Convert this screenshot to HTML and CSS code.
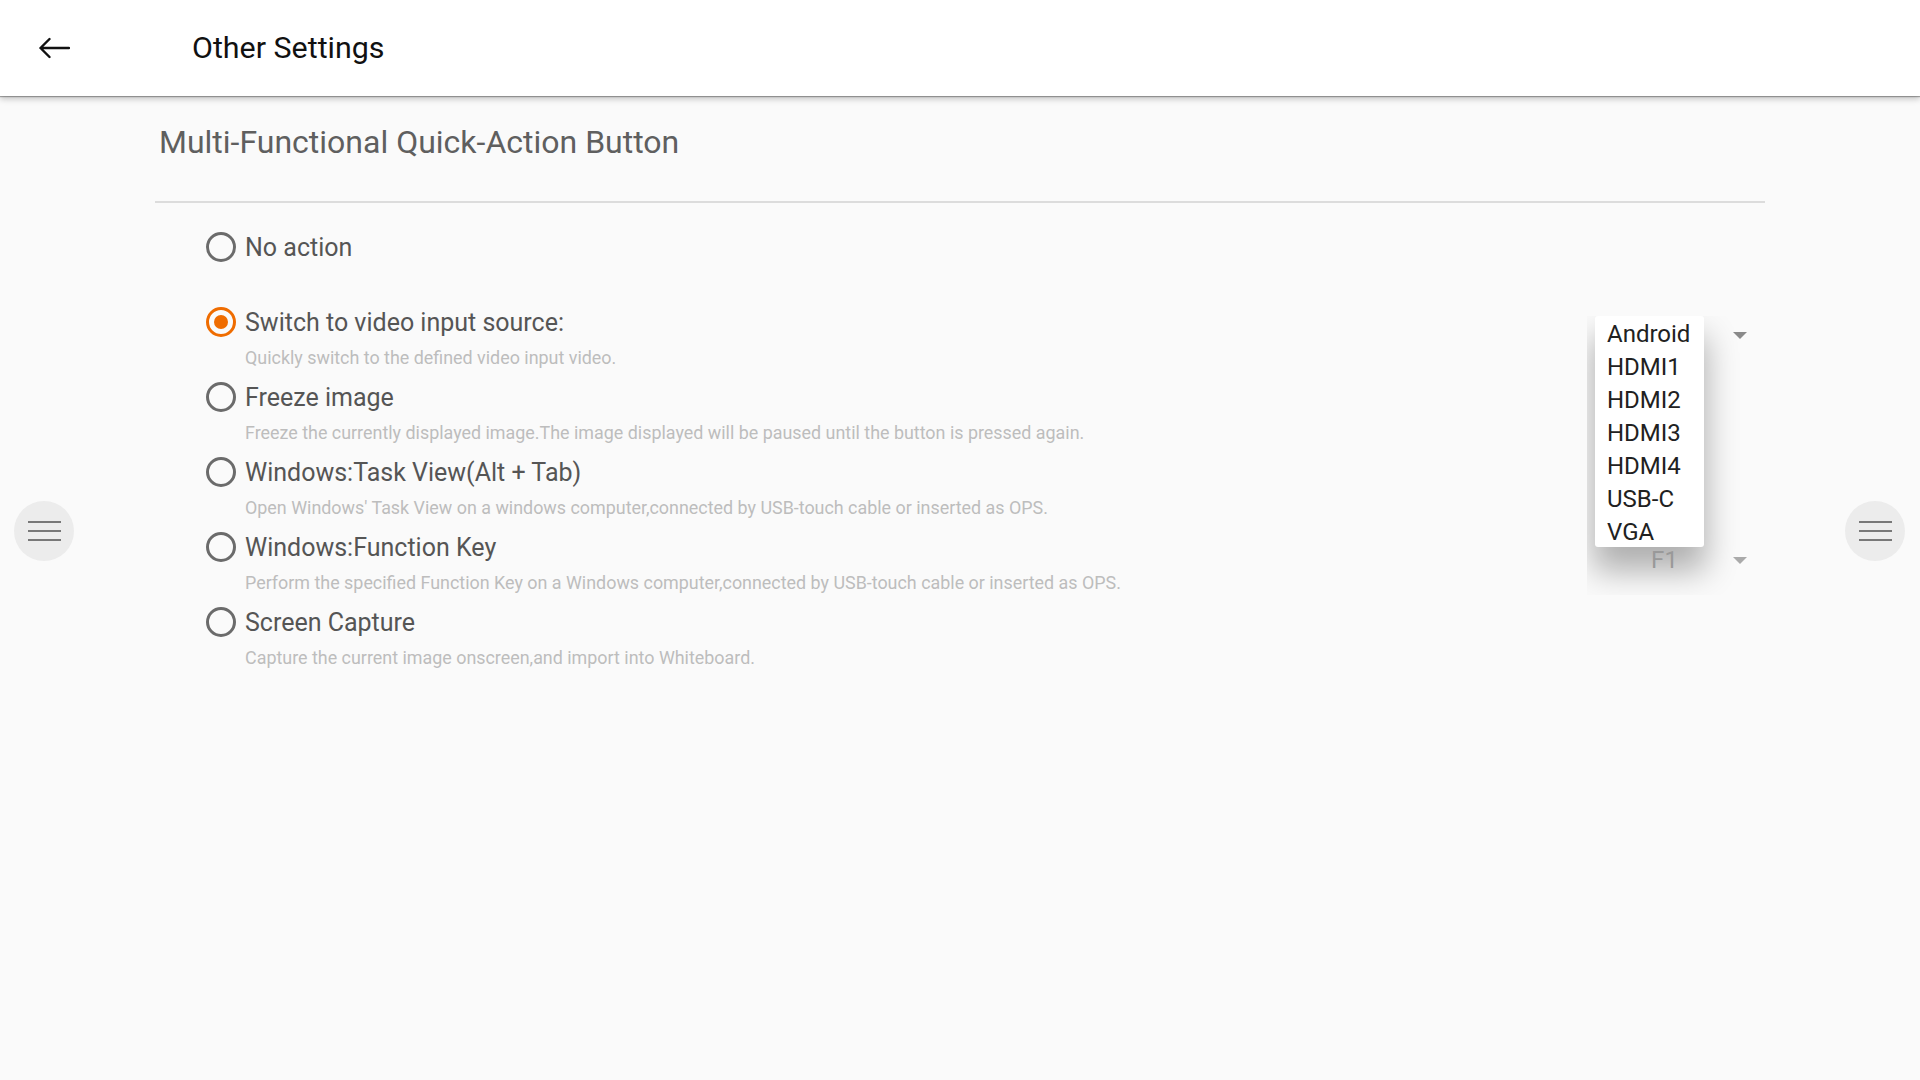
FILE: index.html
```html
<!DOCTYPE html>
<html lang="en">

<head>
    <meta charset="UTF-8">
    <meta name="viewport" content="width=device-width, initial-scale=1.0">
    <title>Other Settings</title>
    <link rel="stylesheet" href="styles.css">
</head>

<body>

    <header class="topbar">
        <svg class="back" width="32" height="22" viewBox="0 0 32 22">
            <path d="M31 11 H2.5 M11.5 2 L2.5 11 L11.5 20" fill="none" stroke="#111" stroke-width="2.4" stroke-linecap="round" stroke-linejoin="round" />
        </svg>
        <h1>Other Settings</h1>
    </header>

    <main class="page">
        <button class="side side-left"><span></span><span></span><span></span></button>
        <button class="side side-right"><span></span><span></span><span></span></button>

        <section class="content">
            <h2>Multi-Functional Quick-Action Button</h2>
            <div class="divider"></div>

            <ul class="options">
                <li class="option">
                    <div class="option-main">
                        <div class="label"><i class="radio"></i>No action</div>
                        <p class="desc"></p>
                    </div>
                </li>
                <li class="option">
                    <div class="option-main">
                        <div class="label"><i class="radio checked"></i>Switch to video input source:</div>
                        <p class="desc">Quickly switch to the defined video input video.</p>
                    </div>
                    <div class="spinner">
                        <span class="value"></span>
                        <i class="caret"></i>
                        <!-- open dropdown, its shadow is clipped by the spinner column -->
                        <div class="dropdown-clip">
                            <ul class="dropdown">
                                <li>Android</li>
                                <li>HDMI1</li>
                                <li>HDMI2</li>
                                <li>HDMI3</li>
                                <li>HDMI4</li>
                                <li>USB-C</li>
                                <li>VGA</li>
                            </ul>
                        </div>
                    </div>
                </li>
                <li class="option">
                    <div class="option-main">
                        <div class="label"><i class="radio"></i>Freeze image</div>
                        <p class="desc">Freeze the currently displayed image.The image displayed will be paused until the button is pressed again.</p>
                    </div>
                </li>
                <li class="option">
                    <div class="option-main">
                        <div class="label"><i class="radio"></i>Windows:Task View(Alt + Tab)</div>
                        <p class="desc">Open Windows' Task View on a windows computer,connected by USB-touch cable or inserted as OPS.</p>
                    </div>
                </li>
                <li class="option">
                    <div class="option-main">
                        <div class="label"><i class="radio"></i>Windows:Function Key</div>
                        <p class="desc">Perform the specified Function Key on a Windows computer,connected by USB-touch cable or inserted as OPS.</p>
                    </div>
                    <div class="spinner disabled">
                        <span class="value">F1</span>
                        <i class="caret"></i>
                    </div>
                </li>
                <li class="option">
                    <div class="option-main">
                        <div class="label"><i class="radio"></i>Screen Capture</div>
                        <p class="desc">Capture the current image onscreen,and import into Whiteboard.</p>
                    </div>
                </li>
            </ul>
        </section>
    </main>

</body>

</html>
```

FILE: styles.css
```css
* {
    margin: 0;
    padding: 0;
    box-sizing: border-box;
    font-family: Roboto, 'Noto Sans', sans-serif;
}

body {
    background-color: #fafafa;
    width: 1920px;
    height: 1080px;
    overflow: hidden;
}

.topbar {
    height: 96px;
    background: #fff;
    display: flex;
    align-items: center;
    padding-left: 38px;
    box-shadow: 0 1px 1px rgba(0, 0, 0, 0.3), 0 3px 6px rgba(0, 0, 0, 0.22);
    position: relative;
    z-index: 2;
}

.topbar .back {
    display: block;
}

.topbar h1 {
    margin-left: 122px;
    font-size: 30.4px;
    font-weight: 400;
    color: #111;
    line-height: 40px;
}

.page {
    position: relative;
    height: 984px;
}

.side {
    position: absolute;
    top: 405px;
    width: 60px;
    height: 60px;
    border: none;
    border-radius: 50%;
    background: #ececec;
    display: flex;
    flex-direction: column;
    align-items: center;
    justify-content: center;
    gap: 7px;
}

.side span {
    display: block;
    width: 33px;
    height: 2px;
    background: #787878;
}

.side-left {
    left: 14px;
}

.side-right {
    right: 15px;
}

.content {
    width: 1765px;
    padding: 26px 0 0 155px;
}

.content h2 {
    font-size: 32px;
    font-weight: 400;
    color: #5f5f5f;
    line-height: 40px;
    padding-left: 4px;
}

.divider {
    margin-top: 39px;
    height: 2px;
    background: #dcdcdc;
}

.options {
    list-style: none;
    margin-top: 25px;
}

.option {
    display: flex;
    height: 75px;
    padding-left: 51px;
}

.option-main {
    flex: 1;
}

.label {
    display: flex;
    align-items: center;
    height: 36px;
    padding-top: 2px;
    font-size: 25px;
    color: #555;
}

.radio {
    width: 30px;
    height: 30px;
    border: 3px solid #6b6b6b;
    border-radius: 50%;
    margin-right: 9px;
    display: flex;
    align-items: center;
    justify-content: center;
}

.radio.checked {
    border-color: #ef6c00;
}

.radio.checked::after {
    content: "";
    width: 14px;
    height: 14px;
    border-radius: 50%;
    background: #ef6c00;
}

.desc {
    margin-top: 9px;
    margin-left: 39px;
    height: 20px;
    line-height: 20px;
    font-size: 17.9px;
    color: #bdbdbd;
}

.spinner {
    position: relative;
    width: 162px;
    height: 64px;
    margin-right: 13px;
    display: flex;
    align-items: center;
}

.spinner .value {
    flex: 1;
    text-align: center;
    font-size: 24px;
    color: #212121;
    padding-left: 6px;
}

.spinner.disabled .value {
    color: #999;
    position: relative;
    z-index: 1;
}

.caret {
    width: 0;
    height: 0;
    border-left: 7px solid transparent;
    border-right: 7px solid transparent;
    border-top: 7px solid #8a8a8a;
    margin-right: 5px;
}

.spinner.disabled .caret {
    border-top-color: #aaa;
    position: relative;
    z-index: 1;
}

.dropdown-clip {
    position: absolute;
    left: -3px;
    top: 13px;
    width: 165px;
    height: 279px;
    overflow: hidden;
}

.dropdown {
    position: absolute;
    left: 8px;
    top: 0;
    width: 109px;
    list-style: none;
    background: #fff;
    border-radius: 3px;
    box-shadow: 0 22px 32px 2px rgba(0, 0, 0, 0.3);
}

.dropdown li {
    height: 33px;
    line-height: 30px;
    padding: 3px 0 0 12px;
    font-size: 24px;
    color: #212121;
}
```
